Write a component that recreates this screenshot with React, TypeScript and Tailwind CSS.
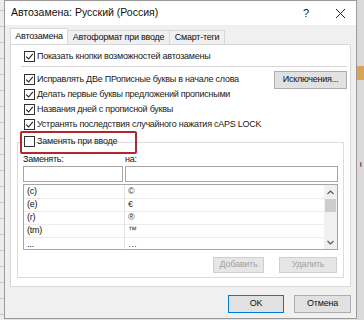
import React from "react";

const font = { fontFamily: '"Liberation Sans", Arial, sans-serif' };

function Check({ checked }: { checked: boolean }) {
  return (
    <span className="flex h-[11px] w-[11px] shrink-0 items-center justify-center border border-[#333] bg-white">
      {checked && (
        <svg width="9" height="9" viewBox="0 0 9 9">
          <path d="M1.2 4.6 L3.6 7 L7.8 1.8" fill="none" stroke="#222" strokeWidth="1.1" />
        </svg>
      )}
    </span>
  );
}

function Row({ label, checked = true }: { label: string; checked?: boolean }) {
  return (
    <div className="flex h-[15px] items-center gap-[2px] whitespace-nowrap text-[#1a1a1a]">
      <Check checked={checked} />
      <span>{label}</span>
    </div>
  );
}

const pairs = [
  ["(c)", "©"],
  ["(e)", "€"],
  ["(r)", "®"],
  ["(tm)", "™"],
  ["...", "…"],
];

export default function App() {
  return (
    <div className="flex h-[320px] w-[364px] overflow-hidden bg-[#e4e4e4] text-[9px] tracking-[-0.25px]" style={font}>
      <div className="flex w-[4px] flex-col gap-[15px] bg-[#ececec] pt-[10px]">
        {Array.from({ length: 20 }).map((_, i) => (
          <div key={i} className="h-px bg-[#c8c8c8]" />
        ))}
      </div>
      <div className="flex h-[319px] w-[353px] flex-col border border-[#9a9a9a] bg-[#f0f0f0]">
        <div className="flex h-[24px] items-center bg-white pl-[6px] pr-[10px] text-[10.5px] tracking-normal text-[#111]">
          <span className="flex-1">Автозамена: Русский (Россия)</span>
          <span className="mr-[26px] text-[11px]">?</span>
          <svg width="11" height="11" viewBox="0 0 11 11">
            <path d="M1 1 L10 10 M10 1 L1 10" stroke="#222" strokeWidth="1" />
          </svg>
        </div>

        <div className="flex flex-col px-[5px] pt-[3px]">
          <div className="flex h-[16px] items-end whitespace-nowrap">
            <div className="flex h-[16px] w-[58px] items-center justify-center border border-b-0 border-[#d9d9d9] bg-white text-[#111]">
              Автозамена
            </div>
            <div className="flex h-[14px] w-[102px] items-center justify-center border border-l-0 border-b-0 border-[#d9d9d9] bg-[#f0f0f0] text-[#111]">
              Автоформат при вводе
            </div>
            <div className="flex h-[14px] w-[55px] items-center justify-center border border-l-0 border-b-0 border-[#d9d9d9] bg-[#f0f0f0] text-[#111]">
              Смарт-теги
            </div>
          </div>

          <div className="flex h-[243px] w-[341px] flex-col border border-[#d9d9d9] bg-white pl-[13px] pr-[3px] pt-[4px]">
            <Row label="Показать кнопки возможностей автозамены" />
            <div className="mb-[5px] ml-[-3px] mt-[2px] h-px bg-[#d5d5d5]" />
            <div className="flex items-start">
              <div className="flex flex-1 flex-col">
                <Row label="Исправлять ДВе ПРописные буквы в начале слова" />
                <Row label="Делать первые буквы предложений прописными" />
                <Row label="Названия дней с прописной буквы" />
                <Row label="Устранять последствия случайного нажатия cAPS LOCK" />
              </div>
              <div className="mt-[-1px] flex h-[18px] w-[73px] items-center justify-center border border-[#adadad] bg-[#e1e1e1] text-[#111]">
                Исключения...
              </div>
            </div>

            <div className="relative ml-[-7px] mt-px flex flex-col">
              <div className="relative z-10 ml-[7px] flex h-[17px] items-center">
                <Row label="Заменять при вводе" checked={false} />
              </div>
              <div className="absolute left-[3px] top-[-2px] z-20 h-[23px] w-[117px] rounded-[2px] border-2 border-[#b3262b]" />
              <div className="mt-[-8px] flex h-[136px] w-[327px] flex-col border border-[#dcdcdc] px-[5px] pt-[10px]">
                <div className="flex h-[13px] items-center text-[#111]">
                  <span className="w-[102px]">Заменять:</span>
                  <span>на:</span>
                </div>
                <div className="flex gap-[2px]">
                  <div className="h-[16px] w-[100px] border border-[#a5a5a5] bg-white" />
                  <div className="h-[16px] flex-1 border border-[#a5a5a5] bg-white" />
                </div>
                <div className="mt-[2px] flex h-[66px] border border-[#a5a5a5] bg-white">
                  <div className="flex flex-1 flex-col pt-px">
                    {pairs.map(([a, b], i) => (
                      <div key={a} className={`flex h-[13px] items-center ${i < 4 ? "border-b border-[#ececec]" : ""}`}>
                        <span className="w-[101px] border-r border-[#e2e2e2] pl-[3px] text-[#111]">{a}</span>
                        <span className="pl-[3px] text-[#333]">{b}</span>
                      </div>
                    ))}
                  </div>
                  <div className="flex w-[13px] flex-col items-center bg-[#f0f0f0]">
                    <svg className="mt-[5px]" width="7" height="5" viewBox="0 0 7 5">
                      <path d="M0.5 4 L3.5 1 L6.5 4" fill="none" stroke="#555" strokeWidth="1.1" />
                    </svg>
                    <div className="mt-[4px] h-[13px] w-[11px] bg-[#cdcdcd]" />
                    <div className="flex-1" />
                    <svg className="mb-[4px]" width="7" height="5" viewBox="0 0 7 5">
                      <path d="M0.5 1 L3.5 4 L6.5 1" fill="none" stroke="#555" strokeWidth="1.1" />
                    </svg>
                  </div>
                </div>
                <div className="mt-[7px] flex justify-end gap-[15px] pr-px">
                  <div className="flex h-[16px] w-[51px] items-center justify-center border border-[#cfcfcf] bg-[#e6e6e6] text-[#a3a3a3]">
                    Добавить
                  </div>
                  <div className="flex h-[16px] w-[58px] items-center justify-center border border-[#cfcfcf] bg-[#e6e6e6] text-[#a3a3a3]">
                    Удалить
                  </div>
                </div>
              </div>
            </div>
          </div>

          <div className="mt-[8px] flex justify-end gap-[10px]">
            <div className="flex h-[18px] w-[56px] items-center justify-center border border-[#0078d7] bg-[#e1e1e1] text-[#111]">
              OK
            </div>
            <div className="flex h-[18px] w-[57px] items-center justify-center border border-[#adadad] bg-[#e1e1e1] text-[#111]">
              Отмена
            </div>
          </div>
        </div>
      </div>
      <div className="flex flex-1 flex-col bg-[#dadada]">
        <div className="mt-[66px] h-[14px] w-full bg-[#d8a35a]" />
        <div className="mt-[78px] w-full text-center text-[9px] text-[#333]">ᵻ</div>
      </div>
    </div>
  );
}
